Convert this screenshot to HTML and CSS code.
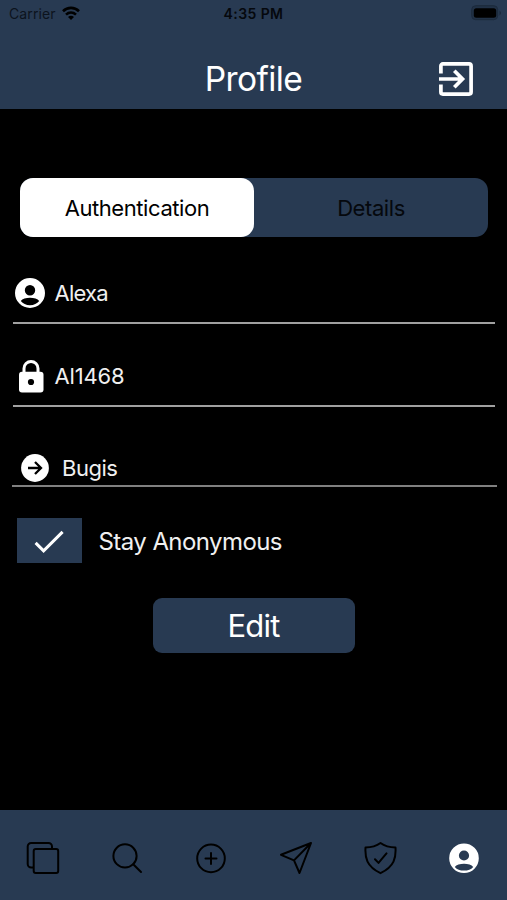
FILE: index.html
```html
<!DOCTYPE html>
<html lang="en">
<head>
<meta charset="utf-8">
<title>Profile</title>
<link rel="stylesheet" href="styles.css">
</head>
<body>
<div class="screen">
  <header class="header">
    <div class="status">
      <div class="status-left">
        <span class="carrier">Carrier</span>
        <svg class="wifi" width="18" height="14" viewBox="0 0 18 14" fill="none" stroke="#000" stroke-width="2.6"><path d="M1 5.2C5.5.8 12.500.8 17 5.200"/><path d="M4 8.600c2.900-2.700 7.100-2.700 10 0"/><path d="M9 14 6 11c1.700-1.600 4.300-1.600 6 0z" fill="#000" stroke="none"/></svg>
      </div>
      <span class="time">4:35 PM</span>
      <svg class="battery" width="31" height="16" viewBox="0 0 31 16"><rect x=".7" y=".7" width="26" height="14" rx="4" fill="#213146" stroke="#1c2a3c"/><rect x="2.800" y="3.200" width="22.400" height="9.600" rx="2.500"/><path d="M28.500 5.500q3 2.500 0 5z" fill="#1b293b"/></svg>
    </div>
    <div class="titlebar">
      <h1 class="title">Profile</h1>
      <svg class="exit" width="36" height="36" viewBox="0 0 36 36" fill="none" stroke="#fff" stroke-width="3.700"><path d="M2.900 12.500V4.900a2 2 0 0 1 2-2h26.200a2 2 0 0 1 2 2v26.200a2 2 0 0 1-2 2H4.900a2 2 0 0 1-2-2v-7.600"/><path d="M1 18h23M16.300 9.800l8.200 8.200-8.200 8.200"/></svg>
    </div>
  </header>
  <main class="content">
    <div class="segments">
      <button class="segment selected">Authentication</button>
      <button class="segment">Details</button>
    </div>
    <div class="field name">
      <svg class="field-icon" width="30" height="30" viewBox="0 0 30 30"><path fill="#fff" fill-rule="evenodd" d="M15 0a15 15 0 1 0 0 30 15 15 0 0 0 0-30zm0 7a5.200 5.200 0 1 1 0 10.400A5.200 5.200 0 0 1 15 7zm0 20.200c-4 0-7-1.700-9.200-4.200 2.800-4.300 15.600-4.300 18.400 0-2.200 2.500-5.200 4.200-9.200 4.200z"/></svg>
      <span>Alexa</span>
    </div>
    <div class="field password">
      <svg class="field-icon" width="30" height="33" viewBox="0 0 30 33"><path d="M9 13V8.500a7 7 0 0 1 14 0V13" fill="none" stroke="#fff" stroke-width="3"/><rect x="4" y="11.700" width="24.500" height="20.800" rx="3" fill="#fff"/><circle cx="16" cy="22" r="3.100"/></svg>
      <span>Al1468</span>
    </div>
    <div class="field place">
      <svg class="field-icon" width="28" height="28" viewBox="0 0 28 28"><circle cx="14" cy="14" r="13.900" fill="#fff"/><path d="M7 14h13M14 8l6 6-6 6" fill="none" stroke="#000" stroke-width="2.300"/></svg>
      <span>Bugis</span>
    </div>
    <div class="anonymous">
      <div class="check"><svg width="30" height="24" viewBox="0 0 30 24" fill="none" stroke="#fff" stroke-width="3"><path d="M1.600 12.900l8 8L28.600 1.900"/></svg></div>
      <span>Stay Anonymous</span>
    </div>
    <button class="edit">Edit</button>
  </main>
  <nav class="tabs">
    <svg width="34" height="34" viewBox="0 0 34 34"><path d="M7 26.500H5.200a3.500 3.500 0 0 1-3.500-3.500V5.500A3.500 3.500 0 0 1 5.200 2h17.300A3.500 3.500 0 0 1 26 5.500V8"/><rect x="7.700" y="8" width="24.500" height="24" rx="2"/></svg>
    <svg width="34" height="34" viewBox="0 0 34 34"><circle cx="14" cy="14.900" r="11.600"/><path d="M22.200 23.200l7.800 7.800"/></svg>
    <svg width="34" height="34" viewBox="0 0 34 34"><circle cx="16" cy="17.400" r="13.800"/><path d="M10.500 17.400h11M16 11.900v11"/></svg>
    <svg width="34" height="34" viewBox="0 0 34 34"><path d="M32 2 2 13.800l13 5.600L20.500 32zM15 19.400 32 2"/></svg>
    <svg width="34" height="34" viewBox="0 0 34 34"><path d="M17.500 2c4 2.900 9 4.400 15 4.600.6 10-1 19-15 25.600C3.500 25.600 1.900 16.600 2.500 6.600 8.500 6.400 13.500 4.900 17.500 2zM12 18.200l3.500 3.700 8-9.500"/></svg>
    <svg class="active" width="34" height="34" viewBox="0 0 34 34"><path fill-rule="evenodd" d="M17 2.400a14.800 14.800 0 1 0 0 29.600 14.800 14.800 0 0 0 0-29.600zm0 7a5.100 5.100 0 1 1 0 10.200 5.100 5.100 0 0 1 0-10.200zm0 20.200c-4 0-7-1.200-9.200-3.700 2.800-4.300 15.600-4.300 18.400 0-2.200 2.500-5.200 3.700-9.200 3.700z"/></svg>
  </nav>
</div>
</body>
</html>
```
FILE: styles.css
```css
* { box-sizing: border-box; }
body {
  margin: 0;
  background: #000;
  font-family: Inter, "Liberation Sans", sans-serif;
}
button { border: 0; padding: 0; font: inherit; }
svg { display: block; flex: none; }
.screen {
  height: 900px;
  display: flex;
  flex-direction: column;
}
.header { height: 108.700px; background: #283a52; }
.status {
  height: 28px;
  padding: 0 5px 0 9px;
  display: grid;
  grid-template-columns: 1fr auto 1fr;
  align-items: center;
  font-size: 14px;
}
.status-left { display: flex; align-items: center; gap: 6px; }
.carrier { color: #0c131d; letter-spacing: .1px; margin-top: -2px; }
.wifi { margin-top: -3px; }
.time {
  margin: -2px 4px 0 0;
  font-weight: 600;
  color: #05080d;
  letter-spacing: .4px;
}
.battery { justify-self: end; margin-top: -2px; }
.titlebar {
  height: 80px;
  padding: 11px 33px 0 0;
  display: grid;
  grid-template-columns: 1fr auto 1fr;
  align-items: start;
}
.title {
  grid-column: 2;
  margin: 20px 0 0 33px;
  color: #fff;
  font-size: 33.500px;
  line-height: 40px;
  font-weight: 400;
  letter-spacing: -.6px;
}
.exit { justify-self: end; margin-top: 22px; }
.content {
  flex: 1;
  display: flex;
  flex-direction: column;
  padding: 69.800px 12px 0;
  color: #f0f0f0;
}
.segments {
  height: 58.500px;
  margin: 0 7px 0 8px;
  display: flex;
  border-radius: 13px;
  background: #283a52;
}
.segment {
  flex: 1;
  color: #05080d;
  font-size: 22px;
  letter-spacing: -.42px;
  background: transparent;
  border-radius: 13px;
}
.segment.selected { background: #fff; color: #000; }
.field {
  display: flex;
  align-items: center;
  font-size: 22px;
  letter-spacing: -.3px;
  border-bottom: 2px solid #a0a0a0;
}
.field-icon { margin-top: 1.500px; }
.name, .password { margin-left: 1px; padding-left: 2px; gap: 9.500px; }
.name { margin-top: 26px; height: 61px; letter-spacing: -.75px; }
.password { margin-top: 22px; height: 61px; letter-spacing: -.15px; }
.password span { margin-top: 1px; }
.name span { margin-top: 1px; }
.place {
  margin: 42.500px -2px 0 0;
  height: 38px;
  padding-left: 9px;
  gap: 13px;
  border-color: #808080;
  letter-spacing: -.5px;
}
.place span { margin-top: 2px; }
.anonymous {
  margin: 31px 0 0 4.500px;
  display: flex;
  align-items: center;
  gap: 16.500px;
  font-size: 24px;
  letter-spacing: -.57px;
}
.anonymous span { margin-top: 2px; }
.check {
  width: 65.500px;
  height: 45px;
  padding-top: 3px;
  display: grid;
  place-items: center;
  background: #283a52;
}
.edit {
  align-self: center;
  width: 202px;
  height: 55px;
  margin-top: 35px;
  border-radius: 9px;
  background: #283a52;
  color: #fff;
  font-size: 31px;
  letter-spacing: -.8px;
}
.tabs {
  height: 90px;
  padding: 6px .600px 0 1.400px;
  display: grid;
  grid-template-columns: repeat(6, 1fr);
  place-items: center;
  background: #283a52;
}
.tabs svg { fill: none; stroke: #000; stroke-width: 2; stroke-linejoin: round; stroke-linecap: round; }
.tabs .active { fill: #fff; stroke: none; }
```
